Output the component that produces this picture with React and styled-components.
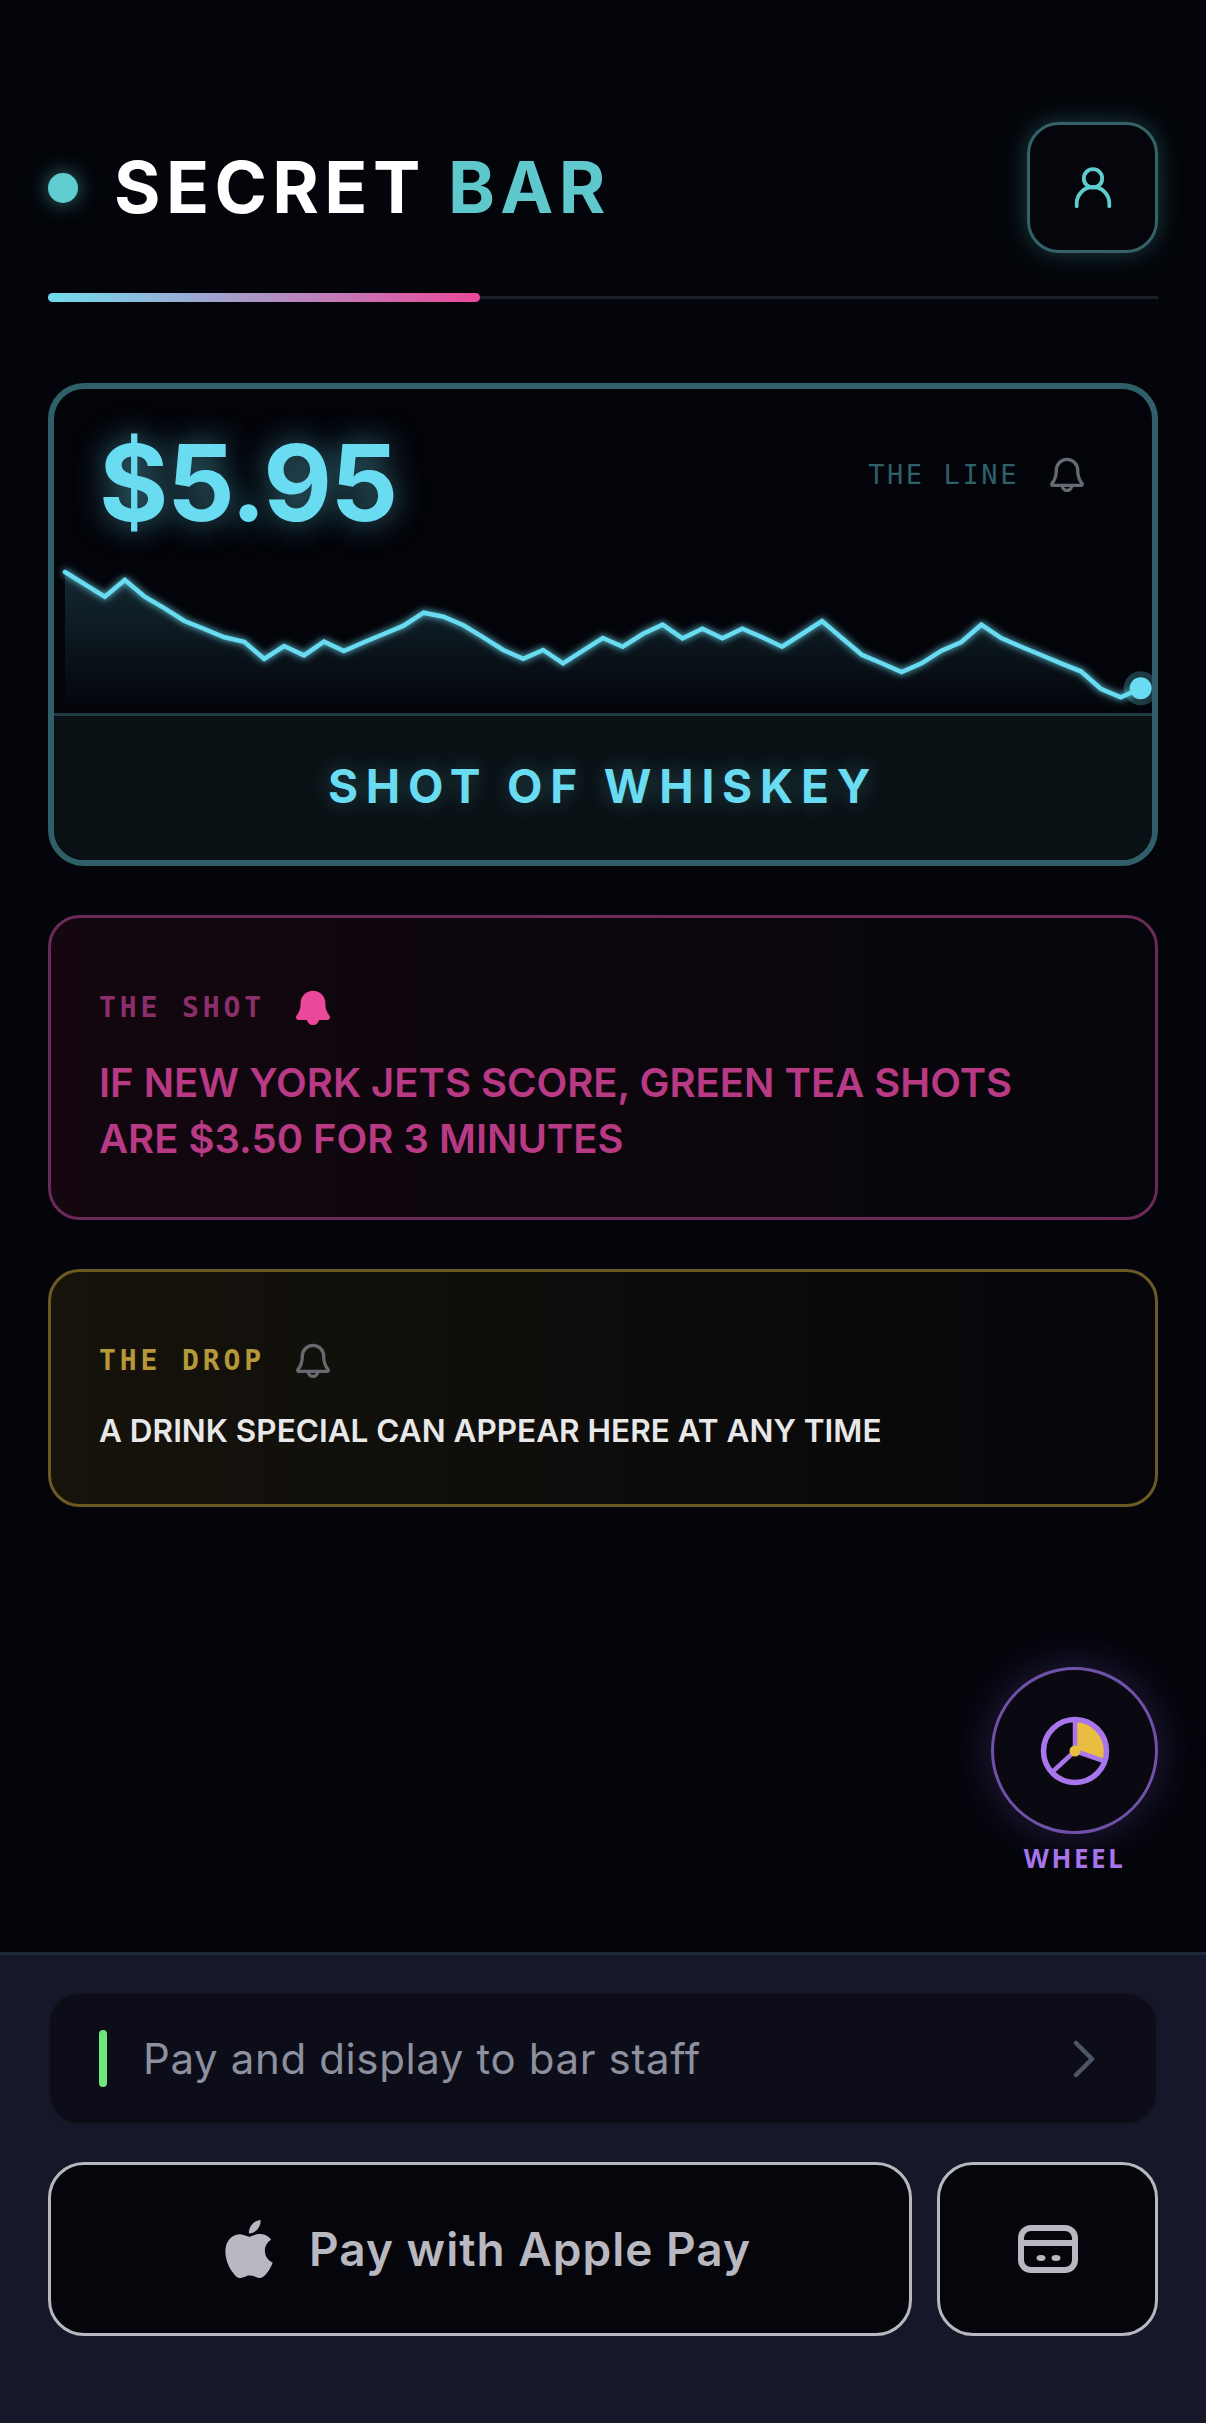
import React from 'react';
import styled, { createGlobalStyle } from 'styled-components';
import { SiApple } from 'react-icons/si';

const sans = '"Inter", "Liberation Sans", sans-serif';
const mono = '"DejaVu Sans Mono", "Liberation Mono", monospace';

const GlobalStyle = createGlobalStyle`
  html, body {
    margin: 0;
    background: #03050a;
  }
  * {
    box-sizing: border-box;
  }
`;

const Page = styled.div`
  width: 1206px;
  height: 2423px;
  display: flex;
  flex-direction: column;
  background: #03050a;
  font-family: ${sans};
  overflow: hidden;
`;

const Main = styled.main`
  flex: 1;
  display: flex;
  flex-direction: column;
  padding: 122px 48px 0;
`;

const Header = styled.header`
  height: 131px;
  display: flex;
  align-items: center;
  justify-content: space-between;
`;

const Brand = styled.div`
  display: flex;
  align-items: center;
  gap: 36px;
`;

const Dot = styled.span`
  width: 30px;
  height: 30px;
  margin-top: 1px;
  border-radius: 50%;
  background: #5fcdd0;
  box-shadow: 0 0 20px rgba(95, 205, 208, 0.55);
`;

const Title = styled.h1`
  margin: 0;
  font-size: 71px;
  line-height: 1;
  font-weight: 700;
  letter-spacing: 5.4px;
  color: #fff;
  white-space: nowrap;

  span {
    color: #5ec8cc;
  }
`;

const ProfileButton = styled.button`
  width: 131px;
  height: 131px;
  padding: 0 0 2px;
  display: flex;
  align-items: center;
  justify-content: center;
  background: #04060b;
  border: 3px solid #356269;
  border-radius: 32px;
  box-shadow: 0 0 24px rgba(95, 205, 208, 0.28);
`;

const Progress = styled.div`
  position: relative;
  height: 9px;
  margin: 40px 0 81px;
  display: flex;
  align-items: center;
  background: linear-gradient(#1d1f26, #1d1f26) center / 100% 3px no-repeat;
`;

const ProgressFill = styled.div`
  height: 9px;
  border-radius: 5px;
  background: linear-gradient(90deg, #70dcef, #ec4899);
`;

const Stack = styled.div`
  display: flex;
  flex-direction: column;
  gap: 49px;
`;

const PriceCard = styled.section`
  border: 6px solid #2f5f69;
  border-radius: 36px;
  background: #03040a;
  overflow: hidden;
`;

const PriceTop = styled.div`
  height: 166px;
  padding: 41px 65px 0 45px;
  display: flex;
  align-items: flex-start;
  justify-content: space-between;
`;

const Price = styled.div`
  font-size: 106px;
  line-height: 1;
  font-weight: 700;
  letter-spacing: -1.5px;
  color: #69dcf1;
  text-shadow: 0 0 30px rgba(105, 220, 241, 0.5);
`;

const LabelRow = styled.div`
  display: flex;
  align-items: center;
  gap: ${(p) => p.$gap || 28}px;
  margin-top: ${(p) => p.$top || 0}px;
`;

const Label = styled.span`
  font-family: ${mono};
  font-size: ${(p) => p.$size || 27}px;
  line-height: 36px;
  font-weight: ${(p) => p.$weight || 400};
  letter-spacing: ${(p) => p.$spacing || 2.6}px;
  color: ${(p) => p.$color};
  white-space: nowrap;
`;

const ChartSvg = styled.svg`
  display: block;
  width: 100%;
  height: 158px;
`;

const DrinkName = styled.div`
  height: 147px;
  padding-bottom: 4px;
  display: flex;
  align-items: center;
  justify-content: center;
  border-top: 3px solid #1f3a40;
  background: #0a1115;
  font-size: 46px;
  font-weight: 700;
  letter-spacing: 7.8px;
  color: #69dcf1;
  text-shadow: 0 0 22px rgba(105, 220, 241, 0.3);
`;

const Notice = styled.section`
  padding: ${(p) => p.$pad};
  border: 3px solid ${(p) => p.$border};
  border-radius: 32px;
  background: linear-gradient(90deg, ${(p) => p.$tint}, #05060b);
`;

const NoticeText = styled.p`
  margin: ${(p) => p.$top}px 0 0;
  font-size: ${(p) => p.$size}px;
  line-height: ${(p) => p.$line}px;
  font-weight: 600;
  color: ${(p) => p.$color};
`;

const WheelWrap = styled.div`
  align-self: flex-end;
  margin-top: 160px;
  width: 167px;
  display: flex;
  flex-direction: column;
  align-items: center;
`;

const WheelButton = styled.button`
  width: 167px;
  height: 167px;
  padding: 0;
  display: flex;
  align-items: center;
  justify-content: center;
  border: 3px solid #6f52a8;
  border-radius: 50%;
  background: #0a0810;
  box-shadow: 0 0 44px rgba(150, 100, 240, 0.26);
`;

const WheelLabel = styled.span`
  margin-top: 6px;
  font-family: "Noto Sans", sans-serif;
  font-size: 26px;
  line-height: 36px;
  font-weight: 700;
  letter-spacing: 2.6px;
  color: #a874ea;
`;

const Footer = styled.footer`
  height: 471px;
  padding: 37px 48px 0;
  display: flex;
  flex-direction: column;
  gap: 37px;
  border-top: 3px solid #1f2a3d;
  background: #161729;
`;

const InfoRow = styled.div`
  height: 133px;
  padding: 0 60px 0 49px;
  display: flex;
  align-items: center;
  border: 2px solid #151622;
  border-radius: 32px;
  background: #0c0d18;
`;

const GreenBar = styled.span`
  width: 8px;
  height: 57px;
  border-radius: 4px;
  background: #6ee77a;
`;

const InfoText = styled.span`
  flex: 1;
  margin-left: 36px;
  font-size: 42px;
  letter-spacing: 0.63px;
  color: #8d909e;
`;

const PayRow = styled.div`
  display: flex;
  gap: 25px;
`;

const PayButton = styled.button`
  flex: ${(p) => (p.$wide ? 1 : '0 0 221px')};
  height: 174px;
  padding: 0 0 0 ${(p) => (p.$wide ? 11 : 0)}px;
  display: flex;
  align-items: center;
  justify-content: center;
  gap: 31px;
  border: 3px solid #b8b8c0;
  border-radius: 36px;
  background: #05050c;
  font-family: ${sans};
  font-size: 46px;
  font-weight: 600;
  letter-spacing: 1px;
  color: #b8b8c0;
`;

const line = [
  572, 584.3, 596.7, 580, 596.7, 608.3, 621, 629, 637.3, 641.7, 659, 646, 655.3, 641.7, 651,
  642.3, 634, 625.7, 612.7, 616.7, 625.3, 637.3, 650, 658.7, 650, 663.3, 650.7, 638, 646.7, 634,
  624.7, 638.3, 628.7, 638.3, 628.7, 637.3, 646.7, 634, 621, 638, 654.7, 663.3, 672, 663.3, 650.7,
  642, 624.7, 638, 646.7, 655, 663.3, 671.3, 688.7, 697.3, 688.3,
];

function Chart() {
  // sampled in page coordinates, the svg starts at (54, 555)
  const pts = line.map((y, i) => [11 + i * 19.92, y - 555]);
  const d = pts.map(([x, y]) => `${x.toFixed(1)},${y.toFixed(1)}`).join(' ');
  const last = pts[pts.length - 1];
  return (
    <ChartSvg viewBox="0 0 1098 158">
      <defs>
        <linearGradient id="area" x1="0" y1="0" x2="0" y2="1">
          <stop offset="0" stopColor="#69dcf1" stopOpacity="0.17" />
          <stop offset="1" stopColor="#69dcf1" stopOpacity="0" />
        </linearGradient>
        <filter id="glow" x="-5%" y="-30%" width="110%" height="160%">
          <feGaussianBlur stdDeviation="3.500" result="blur" />
          <feMerge>
            <feMergeNode in="blur" />
            <feMergeNode in="SourceGraphic" />
          </feMerge>
        </filter>
      </defs>
      <polygon points={`11,158 ${d} ${last[0]},158`} fill="url(#area)" />
      <polyline
        points={d}
        fill="none"
        stroke="#69dcf1"
        strokeWidth="4.500"
        strokeLinecap="round"
        strokeLinejoin="miter"
        filter="url(#glow)"
      />
      <circle cx={last[0]} cy={last[1]} r="17" fill="#69dcf1" opacity="0.25" />
      <circle cx={last[0]} cy={last[1]} r="11" fill="#69dcf1" />
    </ChartSvg>
  );
}

function Bell({ color, filled }) {
  const body = 'M12 2.6a6.4 6.4 0 0 0-6.4 6.4c0 4-1 6.2-2.6 8-.4.6-.1 1.2.6 1.2h16.800c.7 0 1-.6.6-1.200-1.600-1.800-2.600-4-2.600-8A6.400 6.400 0 0 0 12 2.600z';
  return (
    <svg width="40" height="40" viewBox="0 0 24 24" fill="none" stroke={color} strokeWidth="2" strokeLinejoin="round">
      <path d={body} fill={filled ? color : 'none'} />
      <path d="M9.200 18.400a2.800 2.800 0 0 0 5.600 0" fill={filled ? color : 'none'} />
    </svg>
  );
}

function UserIcon() {
  return (
    <svg width="46" height="46" viewBox="0 0 24 24" fill="none" stroke="#5fcdd0" strokeWidth="2" strokeLinecap="round">
      <circle cx="12" cy="7.500" r="4.800" />
      <path d="M3.500 22v-1.500a8.500 8.500 0 0 1 17 0V22" />
    </svg>
  );
}

function WheelIcon() {
  return (
    <svg width="80" height="80" viewBox="-40 -40 80 80" fill="none" stroke="#a875ec" strokeWidth="5.500">
      <path d="M0 0L0-31A31 31 0 0 1 29.300 10.100Z" fill="#e8bd40" stroke="none" />
      <circle r="31.500" />
      <path d="M0 0V-31M0 0L29.800 10.300M0 0L-22.300 20.700" strokeWidth="4.500" />
      <circle r="5.500" fill="#e8bd40" stroke="none" />
    </svg>
  );
}

function CardIcon() {
  return (
    <svg width="60" height="48" viewBox="0 0 60 48" fill="none" stroke="#b8b8c0" strokeWidth="6">
      <rect x="3" y="3" width="54" height="42" rx="10" />
      <path d="M3 18H57" />
      <ellipse cx="23" cy="33" rx="4.500" ry="3" fill="#b8b8c0" stroke="none" />
      <ellipse cx="38" cy="33" rx="4.500" ry="3" fill="#b8b8c0" stroke="none" />
    </svg>
  );
}

function App() {
  return (
    <Page>
      <GlobalStyle />
      <Main>
        <Header>
          <Brand>
            <Dot />
            <Title>
              SECRET <span>BAR</span>
            </Title>
          </Brand>
          <ProfileButton>
            <UserIcon />
          </ProfileButton>
        </Header>

        <Progress>
          <ProgressFill style={{ width: `${(432 / 1110) * 100}%` }} />
        </Progress>

        <Stack>
          <PriceCard>
            <PriceTop>
              <Price>$5.95</Price>
              <LabelRow $top={25}>
                <Label $color="#2f5f69">THE LINE</Label>
                <Bell color="#666a70" />
              </LabelRow>
            </PriceTop>
            <Chart />
            <DrinkName>SHOT OF WHISKEY</DrinkName>
          </PriceCard>

          <Notice $pad="70px 48px 50px" $border="#6b2a58" $tint="#14070f">
            <LabelRow $gap={28}>
              <Label $size={28} $color="#8a2f6c" $weight={700} $spacing={3.9}>THE SHOT</Label>
              <Bell color="#ec4899" filled />
            </LabelRow>
            <NoticeText $top={27} $size={40} $line={56} $color="#b83a85">
              IF NEW YORK JETS SCORE, GREEN TEA SHOTS
              <br />
              ARE $3.50 FOR 3 MINUTES
            </NoticeText>
          </Notice>

          <Notice $pad="69px 48px 51px" $border="#6b5a24" $tint="#16130b">
            <LabelRow $gap={28}>
              <Label $size={28} $color="#b5983a" $weight={700} $spacing={3.9}>THE DROP</Label>
              <Bell color="#666a70" />
            </LabelRow>
            <NoticeText $top={27} $size={31.5} $line={45} $color="#e8e8e8">
              A DRINK SPECIAL CAN APPEAR HERE AT ANY TIME
            </NoticeText>
          </Notice>
        </Stack>

        <WheelWrap>
          <WheelButton>
            <WheelIcon />
          </WheelButton>
          <WheelLabel>WHEEL</WheelLabel>
        </WheelWrap>
      </Main>

      <Footer>
        <InfoRow>
          <GreenBar />
          <InfoText>Pay and display to bar staff</InfoText>
          <svg width="24" height="38" viewBox="0 0 24 38" fill="none" stroke="#4e5566" strokeWidth="4.500" strokeLinecap="round" strokeLinejoin="round">
            <path d="M4 3L20 19L4 35" />
          </svg>
        </InfoRow>
        <PayRow>
          <PayButton $wide>
            <SiApple size={58} />
            Pay with Apple Pay
          </PayButton>
          <PayButton>
            <CardIcon />
          </PayButton>
        </PayRow>
      </Footer>
    </Page>
  );
}

export default App;
